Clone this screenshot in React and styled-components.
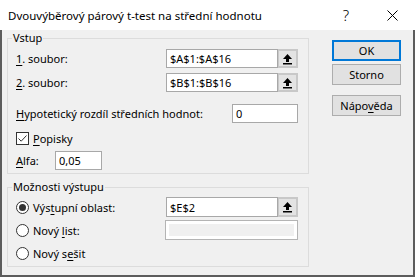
import React from 'react'
import styled, { createGlobalStyle } from 'styled-components'

const GlobalStyle = createGlobalStyle`
  html, body {
    margin: 0;
    padding: 0;
    background: #ffffff;
  }
  body {
    font-family: 'Noto Sans', 'Liberation Sans', sans-serif;
    font-size: 11px;
    color: #000;
  }
`

const Window = styled.div`
  width: 415px;
  height: 277px;
  display: flex;
  flex-direction: column;
  background: #f0f0f0;
`

const TitleBar = styled.div`
  height: 30px;
  flex: 0 0 30px;
  display: flex;
  align-items: center;
  background: #ffffff;
  padding-left: 8px;
`

const Title = styled.div`
  flex: 1;
  font-size: 11.5px;
  white-space: nowrap;
`

const TitleButton = styled.div`
  width: ${p => p.w}px;
  height: 30px;
  display: flex;
  align-items: center;
  justify-content: center;
  font-size: 15px;
  font-weight: 300;
`

const Body = styled.div`
  flex: 1;
  display: flex;
  border: 2px solid #5c5c5c;
  border-top: none;
  padding: 1px 0 0 5px;
`

const LeftColumn = styled.div`
  width: 302px;
  display: flex;
  flex-direction: column;
`

const ButtonColumn = styled.div`
  margin-left: 23px;
  padding-top: 9px;
  display: flex;
  flex-direction: column;
`

const DialogButton = styled.button`
  width: 69px;
  height: 21px;
  margin-top: ${p => p.gap || 0}px;
  padding: 0;
  box-sizing: border-box;
  font-family: inherit;
  font-size: 11px;
  color: #000;
  background: #e1e1e1;
  border: ${p => (p.primary ? '2px solid #0078d7' : '1px solid #adadad')};
`

const Group = styled.fieldset`
  margin: ${p => p.top || 0}px 0 0 0;
  padding: ${p => p.padTop}px 10px ${p => p.padBottom}px 8px;
  border: 1px solid #dcdcdc;
  min-width: 0;
`

const Legend = styled.legend`
  font-size: 11px;
  line-height: 14px;
  padding: 0 1px;
  margin-left: -4px;
`

const Row = styled.div`
  display: flex;
  align-items: center;
  height: ${p => p.h || 19}px;
  margin-top: ${p => p.gap || 0}px;
`

const Label = styled.div`
  width: ${p => p.w}px;
  flex: 0 0 auto;
  white-space: nowrap;
`

const Key = styled.span`
  text-decoration: underline;
  text-underline-offset: 2px;
`

const TextBox = styled.div`
  width: ${p => (p.w ? `${p.w}px` : 'auto')};
  flex: ${p => (p.w ? '0 0 auto' : '1')};
  height: 100%;
  box-sizing: border-box;
  border: 1px solid #a8a8a8;
  background: #ffffff;
  padding-left: 3px;
  display: flex;
  align-items: center;
  white-space: nowrap;
`

const DisabledBox = styled.div`
  width: 133px;
  height: 100%;
  box-sizing: border-box;
  border: 1px solid #b4b4b4;
  background: #ffffff;
  padding: 3px;
`

const DisabledFill = styled.div`
  height: 100%;
  background: #f0f0f0;
`

const RefEdit = styled.div`
  width: 132px;
  height: 100%;
  display: flex;
`

const ArrowButton = styled.div`
  width: 20px;
  height: 100%;
  box-sizing: border-box;
  border: 2px solid #c8c8c8;
  border-left: 1px solid #c8c8c8;
  background: #e3e3e3;
  display: flex;
  align-items: center;
  justify-content: center;
`

const CheckBox = styled.div`
  width: 13px;
  height: 13px;
  box-sizing: border-box;
  border: 1px solid #333;
  background: #fff;
  margin-right: 4px;
  display: flex;
  align-items: center;
  justify-content: center;
`

const Radio = styled.div`
  width: 13px;
  height: 13px;
  flex: 0 0 auto;
  box-sizing: border-box;
  border: 1px solid #333;
  border-radius: 50%;
  background: #fff;
  margin-right: 4px;
  display: flex;
  align-items: center;
  justify-content: center;
  &::after {
    content: '';
    width: 7px;
    height: 7px;
    border-radius: 50%;
    background: ${p => (p.checked ? '#333' : 'transparent')};
  }
`

const RadioLabel = styled.div`
  width: 150px;
  display: flex;
  align-items: center;
  white-space: nowrap;
`

const UpArrow = () => (
  <svg width="11" height="12" viewBox="0 0 11 12">
    <polygon points="5.5,1 10,6 1,6" fill="#000" />
    <rect x="4" y="5.5" width="3" height="3.5" fill="#000" />
    <rect x="1" y="10" width="9" height="1.5" fill="#000" />
  </svg>
)

const CloseIcon = () => (
  <svg width="11" height="11" viewBox="0 0 11 11">
    <path d="M0.5 0.5 L10.5 10.5 M10.5 0.5 L0.5 10.5" stroke="#000" strokeWidth="1" />
  </svg>
)

const Check = () => (
  <svg width="11" height="11" viewBox="0 0 11 11">
    <path d="M1.5 5.5 L4.2 8.2 L9.5 2.5" stroke="#333" strokeWidth="1" fill="none" />
  </svg>
)

const RangeField = ({ value }) => (
  <RefEdit>
    <TextBox>{value}</TextBox>
    <ArrowButton>
      <UpArrow />
    </ArrowButton>
  </RefEdit>
)

export default function App() {
  return (
    <>
      <GlobalStyle />
      <Window>
        <TitleBar>
          <Title>Dvouvýběrový párový t-test na střední hodnotu</Title>
          <TitleButton w={46}>?</TitleButton>
          <TitleButton w={46}>
            <CloseIcon />
          </TitleButton>
        </TitleBar>
        <Body>
          <LeftColumn>
            <Group padTop={4} padBottom={3}>
              <Legend>Vstup</Legend>
              <Row>
                <Label w={150}>
                  <Key>1</Key>. soubor:
                </Label>
                <RangeField value="$A$1:$A$16" />
              </Row>
              <Row gap={5}>
                <Label w={150}>
                  <Key>2</Key>. soubor:
                </Label>
                <RangeField value="$B$1:$B$16" />
              </Row>
              <Row gap={12}>
                <Label w={216}>
                  <Key>H</Key>ypotetický rozdíl středních hodnot:
                </Label>
                <TextBox w={66}>0</TextBox>
              </Row>
              <Row gap={8} h={14}>
                <CheckBox>
                  <Check />
                </CheckBox>
                <Label>
                  <Key>P</Key>opisky
                </Label>
              </Row>
              <Row gap={6}>
                <Label w={39}>
                  <Key>A</Key>lfa:
                </Label>
                <TextBox w={47}>0,05</TextBox>
              </Row>
            </Group>
            <Group top={6} padTop={3} padBottom={3}>
              <Legend>Možnosti výstupu</Legend>
              <Row h={20}>
                <RadioLabel>
                  <Radio checked />
                  <span>
                    Výs<Key>t</Key>upní oblast:
                  </span>
                </RadioLabel>
                <RangeField value="$E$2" />
              </Row>
              <Row h={20} gap={3}>
                <RadioLabel>
                  <Radio />
                  <span>
                    Nový <Key>l</Key>ist:
                  </span>
                </RadioLabel>
                <DisabledBox>
                  <DisabledFill />
                </DisabledBox>
              </Row>
              <Row h={20} gap={3}>
                <RadioLabel>
                  <Radio />
                  <span>
                    Nový s<Key>e</Key>šit
                  </span>
                </RadioLabel>
              </Row>
            </Group>
          </LeftColumn>
          <ButtonColumn>
            <DialogButton primary>OK</DialogButton>
            <DialogButton gap={3}>Storno</DialogButton>
            <DialogButton gap={10}>
              Nápo<Key>v</Key>ěda
            </DialogButton>
          </ButtonColumn>
        </Body>
      </Window>
    </>
  )
}
